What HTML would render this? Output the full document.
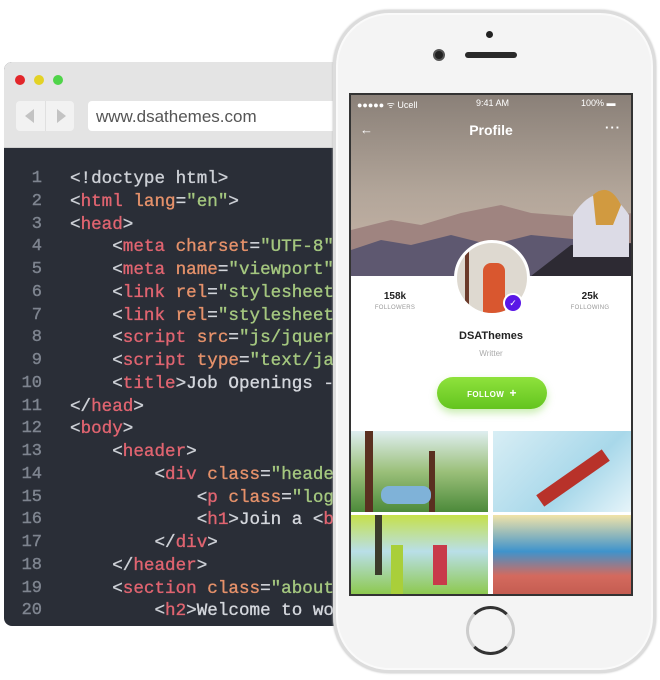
<!DOCTYPE html>
<html><head><meta charset="utf-8"><style>
*{margin:0;padding:0;box-sizing:border-box}
body{width:660px;height:680px;background:#fff;position:relative;overflow:hidden;font-family:"Liberation Sans",sans-serif}
.win{position:absolute;left:4px;top:62px;width:340px;height:564px;border-radius:8px;overflow:hidden;background:#2a2e37}
.bar{position:absolute;left:0;top:0;width:100%;height:86px;background:#e4e4e4;border-bottom:1px solid #cfcfcf}
.dot{position:absolute;top:13px;width:10px;height:10px;border-radius:50%}
.nav{position:absolute;left:12px;top:39px;width:58px;height:30px;background:#f2f2f2;border-radius:4px}
.nav:after{content:"";position:absolute;left:29px;top:0;width:1px;height:30px;background:#e0e0e0}
.url{position:absolute;left:84px;top:39px;width:260px;height:30px;background:#fff;border-radius:4px;font-size:17px;color:#555;padding:6px 0 0 8px}
.code{position:absolute;left:0;top:106px;font-family:"Liberation Mono",monospace;font-size:17.6px;line-height:22.75px;color:#d4d7dd;white-space:pre;-webkit-text-stroke:0.35px}
.ln{position:absolute;left:0;top:106px;width:38px;text-align:right;font-family:"Liberation Mono",monospace;font-size:17px;line-height:22.75px;color:#7e848f;white-space:pre;-webkit-text-stroke:0.4px}
.t{color:#e06470}.a{color:#e5916a}.s{color:#a4c77f}.g{color:#cdd0d6}
.phone{position:absolute;left:333px;top:10px;width:323px;height:663px;border-radius:56px;background:#f4f4f4;border:3px solid #dcdcdc;box-shadow:inset 0 0 0 2px #fafafa,0 0 2px #bbb}
.screen{position:absolute;left:349px;top:93px;width:284px;height:503px;background:#fff;border:2px solid #333;overflow:hidden}
.hdr{position:absolute;left:0;top:0;width:100%;height:181px;background:linear-gradient(#8a8078,#b3a69a 55%,#c9b6a8)}
.st{position:absolute;top:3px;font-size:9px;color:#fff}
.stat{position:absolute;top:196px;width:80px;text-align:center}
.stat b{display:block;font-size:10px;color:#222}
.stat span{display:block;font-size:6px;color:#999;margin-top:3px;letter-spacing:.3px}
.img{position:absolute;width:137px;height:81px;overflow:hidden}
</style></head><body>
<div class="win">
 <div class="bar">
  <div class="dot" style="left:11px;background:#e2262a"></div>
  <div class="dot" style="left:30px;background:#e3d225"></div>
  <div class="dot" style="left:49px;background:#4fd449"></div>
  <div class="nav"><span style="position:absolute;left:9px;top:8px;width:0;height:0;border:7px solid transparent;border-right:9px solid #c3c3c3;border-left:0"></span><span style="position:absolute;left:41px;top:8px;width:0;height:0;border:7px solid transparent;border-left:9px solid #c3c3c3;border-right:0"></span></div>
  <div class="url">www.dsathemes.com</div>
 </div>
 <div class="ln">1
2
3
4
5
6
7
8
9
10
11
12
13
14
15
16
17
18
19
20</div>
 <div class="code" style="left:66px"><span class="g">&lt;!doctype html&gt;</span>
<span class="g">&lt;</span><span class="t">html</span> <span class="a">lang</span>=<span class="s">"en"</span><span class="g">&gt;</span>
<span class="g">&lt;</span><span class="t">head</span><span class="g">&gt;</span>
    <span class="g">&lt;</span><span class="t">meta</span> <span class="a">charset</span>=<span class="s">"UTF-8"</span>
    <span class="g">&lt;</span><span class="t">meta</span> <span class="a">name</span>=<span class="s">"viewport"</span>
    <span class="g">&lt;</span><span class="t">link</span> <span class="a">rel</span>=<span class="s">"stylesheet"</span>
    <span class="g">&lt;</span><span class="t">link</span> <span class="a">rel</span>=<span class="s">"stylesheet"</span>
    <span class="g">&lt;</span><span class="t">script</span> <span class="a">src</span>=<span class="s">"js/jquery</span>
    <span class="g">&lt;</span><span class="t">script</span> <span class="a">type</span>=<span class="s">"text/java</span>
    <span class="g">&lt;</span><span class="t">title</span><span class="g">&gt;</span>Job Openings -
<span class="g">&lt;/</span><span class="t">head</span><span class="g">&gt;</span>
<span class="g">&lt;</span><span class="t">body</span><span class="g">&gt;</span>
    <span class="g">&lt;</span><span class="t">header</span><span class="g">&gt;</span>
        <span class="g">&lt;</span><span class="t">div</span> <span class="a">class</span>=<span class="s">"header</span>
            <span class="g">&lt;</span><span class="t">p</span> <span class="a">class</span>=<span class="s">"logo</span>
            <span class="g">&lt;</span><span class="t">h1</span><span class="g">&gt;</span>Join a <span class="g">&lt;</span><span class="t">b</span>
        <span class="g">&lt;/</span><span class="t">div</span><span class="g">&gt;</span>
    <span class="g">&lt;/</span><span class="t">header</span><span class="g">&gt;</span>
    <span class="g">&lt;</span><span class="t">section</span> <span class="a">class</span>=<span class="s">"about</span>
        <span class="g">&lt;</span><span class="t">h2</span><span class="g">&gt;</span>Welcome to wo</div>
</div>
<div class="phone"></div>
<div style="position:absolute;left:486px;top:31px;width:7px;height:7px;border-radius:50%;background:#222"></div>
<div style="position:absolute;left:433px;top:49px;width:12px;height:12px;border-radius:50%;background:#222;border:2px solid #555"></div>
<div style="position:absolute;left:465px;top:52px;width:52px;height:6px;border-radius:3px;background:#2a2a2a"></div>
<div style="position:absolute;left:466px;top:606px;width:49px;height:49px;border-radius:50%;border:3px solid #ccc;border-top-color:#333;border-bottom-color:#333"></div>
<div class="screen">
 <div class="hdr">
  <svg width="284" height="181" style="position:absolute;left:0;top:0">
   <path d="M0 135 L40 125 L70 130 L110 118 L150 110 L180 118 L230 122 L284 118 L284 181 L0 181Z" fill="#9f8480"/>
   <path d="M0 155 L30 145 L60 150 L100 140 L140 150 L180 140 L284 150 L284 181 L0 181Z" fill="#5e5870"/>
   <path d="M180 181 L220 150 L284 148 L284 181Z" fill="#2d2a33"/>
   <path d="M222 162 L222 120 Q250 78 278 120 L278 162Z" fill="#dcdbe6"/>
   <path d="M242 100 Q258 86 270 110 L262 130 L245 130Z" fill="#d19a40"/>
  </svg>
  <div class="st" style="left:6px">●●●●● ᯤ Ucell</div>
  <div class="st" style="left:125px">9:41 AM</div>
  <div class="st" style="left:230px">100% ▬</div>
  <div style="position:absolute;left:9px;top:27px;color:#fff;font-size:13px">←</div>
  <div style="position:absolute;left:0;width:100%;top:27px;text-align:center;color:#fff;font-size:14px;font-weight:bold">Profile</div>
  <div style="position:absolute;left:254px;top:25px;color:#fff;font-size:13px;font-weight:bold;letter-spacing:1px">···</div>
 </div>
 <div style="position:absolute;left:103px;top:145px;width:76px;height:76px;border-radius:50%;background:#ded9d0;border:3px solid #fff;overflow:hidden">
  <div style="position:absolute;left:26px;top:20px;width:22px;height:50px;background:#d9572f;border-radius:8px 8px 0 0"></div>
  <div style="position:absolute;left:8px;top:5px;width:4px;height:70px;background:#6b3a2a"></div>
 </div>
 <div style="position:absolute;left:152px;top:198px;width:20px;height:20px;border-radius:50%;background:#5a17e6;border:2px solid #fff;color:#fff;font-size:9px;text-align:center;line-height:16px">✓</div>
 <div class="stat" style="left:4px"><b>158k</b><span>FOLLOWERS</span></div>
 <div class="stat" style="left:199px"><b>25k</b><span>FOLLOWING</span></div>
 <div style="position:absolute;left:0;width:100%;top:235px;text-align:center;font-size:11px;font-weight:bold;color:#222">DSAThemes</div>
 <div style="position:absolute;left:0;width:100%;top:254px;text-align:center;font-size:8px;color:#aaa">Writter</div>
 <div style="position:absolute;left:86px;top:282px;width:110px;height:32px;border-radius:16px;background:linear-gradient(#8fe23c,#63c41f);box-shadow:0 4px 8px rgba(120,210,60,.4);color:#fff;font-size:8px;font-weight:bold;text-align:center;line-height:32px;letter-spacing:.4px">FOLLOW &nbsp;<span style="font-size:12px">+</span></div>
 <div class="img" style="left:0;top:336px;background:linear-gradient(#dfeef0,#9bc07a 50%,#4c8a3a)"><div style="position:absolute;left:14px;top:0;width:8px;height:81px;background:#5a3020"></div><div style="position:absolute;left:78px;top:20px;width:6px;height:61px;background:#5a3020"></div><div style="position:absolute;left:30px;top:55px;width:50px;height:18px;background:#7fb2d8;border-radius:8px"></div></div>
 <div class="img" style="left:142px;top:336px;width:140px;background:linear-gradient(135deg,#d8eef5,#a8d8ea 60%,#e8f5fa)"><div style="position:absolute;left:40px;width:80px;height:14px;background:#b8322a;transform:rotate(-35deg);top:40px"></div></div>
 <div class="img" style="left:0;top:420px;background:linear-gradient(#c6e04a,#b9dfe8 45%,#8cc848)"><div style="position:absolute;left:24px;top:0;width:7px;height:60px;background:#3b3b2b"></div><div style="position:absolute;left:40px;top:30px;width:12px;height:50px;background:#a9cf3a"></div><div style="position:absolute;left:82px;top:30px;width:14px;height:40px;background:#c83a4a"></div></div>
 <div class="img" style="left:142px;top:420px;width:140px;background:linear-gradient(#f1e3a8,#3f93cc 45%,#d46a5e 75%,#c35b50)"></div>
</div>
</body></html>
